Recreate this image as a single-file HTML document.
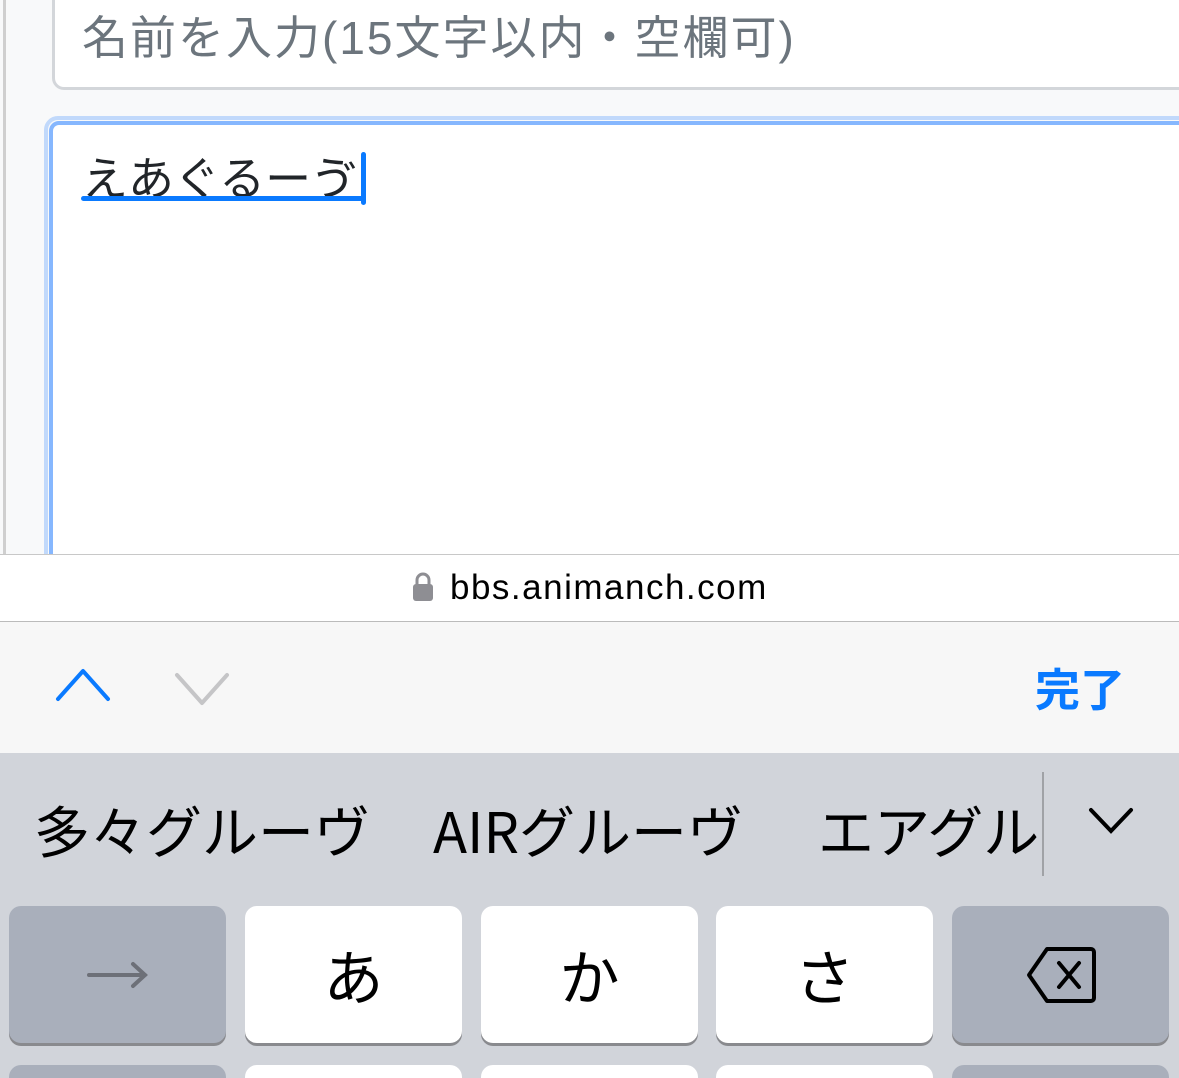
<!DOCTYPE html>
<html style="overflow:hidden;width:1179px;height:1078px"><head><meta charset="utf-8"><style>
*{margin:0;padding:0;box-sizing:border-box}
body{width:1179px;height:1078px;overflow:hidden;background:#f8f9fa;position:relative;font-family:"Liberation Sans","Noto Sans CJK JP",sans-serif}
.a{position:absolute}
.key{position:absolute;top:906px;height:137px;width:217px;border-radius:12px;box-shadow:0 3px 0 #898a8e;display:flex;align-items:center;justify-content:center;font-size:60px;color:#000;font-family:"Noto Sans CJK JP",sans-serif}
.w{background:#fff}.g{background:#a9afbb}
</style></head><body>
<div class="a" style="left:3px;top:0;width:3px;height:554px;background:#cfcfcf"></div>
<div class="a" style="left:52px;top:-20px;width:1160px;height:110px;background:#fff;border:3px solid #d3d6da;border-radius:12px"></div>
<div class="a" style="left:82px;top:8px;font-size:46px;color:#6c757d;white-space:nowrap;line-height:60px;font-family:'Liberation Sans','Noto Sans CJK JP',sans-serif;letter-spacing:2px">名前を入力(15文字以内・空欄可)</div>
<div class="a" style="left:44px;top:116px;width:1160px;height:460px;border:4px solid #c1d9fb;border-radius:14px"></div>
<div class="a" style="left:49px;top:121px;width:1150px;height:450px;border:4px solid #86b7fe;border-radius:10px;background:#fff"></div>
<div class="a" style="left:82px;top:146px;font-size:46px;color:#212529;white-space:nowrap;line-height:60px;font-family:'Noto Sans CJK JP',sans-serif">えあぐるーゔ</div>
<div class="a" style="left:81px;top:196px;width:283px;height:5px;background:#0a7aff;border-radius:3px"></div>
<div class="a" style="left:361px;top:152px;width:5px;height:53px;background:#0a7aff;border-radius:3px"></div>
<div class="a" style="left:0;top:554px;width:1179px;height:68px;background:#fff;border-top:1px solid #c8c8c8;border-bottom:1px solid #bbb"></div>
<svg class="a" style="left:412px;top:572px" width="22" height="30"><path d="M5 13V8a6 6 0 0 1 12 0v5" stroke="#8e8e93" stroke-width="3" fill="none"/><rect x="1" y="12" width="20" height="17" rx="3" fill="#8e8e93"/></svg>
<div class="a" style="left:450px;top:566px;font-size:35px;color:#000;line-height:44px;letter-spacing:1.5px">bbs.animanch.com</div>
<div class="a" style="left:0;top:622px;width:1179px;height:131px;background:#f7f7f7"></div>
<svg class="a" style="left:0;top:650px" width="260" height="70"><path d="M58 49L83 21L108 49" stroke="#0a7aff" stroke-width="4" fill="none" stroke-linecap="round" stroke-linejoin="round"/><path d="M177 25L202 53L227 25" stroke="#c5c5c7" stroke-width="4" fill="none" stroke-linecap="round" stroke-linejoin="round"/></svg>
<div class="a" style="left:1035px;top:658px;font-size:45px;font-weight:bold;color:#0a7aff;line-height:58px;font-family:'Noto Sans CJK JP',sans-serif">完了</div>
<div class="a" style="left:0;top:753px;width:1179px;height:325px;background:#d1d4da"></div>
<div class="a" style="left:34px;top:796px;font-size:56px;color:#000;white-space:nowrap;line-height:68px;font-family:'Noto Sans CJK JP',sans-serif">多々グルーヴ</div>
<div class="a" style="left:433px;top:796px;font-size:56px;color:#000;white-space:nowrap;line-height:68px;font-family:'Noto Sans CJK JP',sans-serif">AIRグルーヴ</div>
<div class="a" style="left:818px;top:796px;font-size:56px;color:#000;white-space:nowrap;line-height:68px;width:224px;overflow:hidden;font-family:'Noto Sans CJK JP',sans-serif">エアグル</div>
<div class="a" style="left:1042px;top:772px;width:2px;height:104px;background:#a0a2a6"></div>
<svg class="a" style="left:1086px;top:804px" width="50" height="34"><path d="M5 6L25 27L45 6" stroke="#000" stroke-width="4" fill="none" stroke-linecap="round"/></svg>
<div class="key g" style="left:9px"><svg width="62" height="30"><path d="M2 15H58M46 4L58 15L46 26" stroke="#6d7078" stroke-width="4" fill="none" stroke-linecap="round"/></svg></div>
<div class="key w" style="left:245px">あ</div>
<div class="key w" style="left:481px">か</div>
<div class="key w" style="left:716px">さ</div>
<div class="key g" style="left:952px"><svg width="72" height="60"><path d="M22 4H66a3 3 0 0 1 3 3V53a3 3 0 0 1-3 3H22L4 30Z" stroke="#000" stroke-width="4" fill="none" stroke-linejoin="round"/><path d="M34 18L54 42M54 18L34 42" stroke="#000" stroke-width="4" stroke-linecap="round"/></svg></div>
<div class="key g" style="left:9px;top:1065px;height:13px;border-radius:12px 12px 0 0;box-shadow:none"></div>
<div class="key w" style="left:245px;top:1065px;height:13px;border-radius:12px 12px 0 0;box-shadow:none"></div>
<div class="key w" style="left:481px;top:1065px;height:13px;border-radius:12px 12px 0 0;box-shadow:none"></div>
<div class="key w" style="left:716px;top:1065px;height:13px;border-radius:12px 12px 0 0;box-shadow:none"></div>
<div class="key g" style="left:952px;top:1065px;height:13px;border-radius:12px 12px 0 0;box-shadow:none"></div>
</body></html>
